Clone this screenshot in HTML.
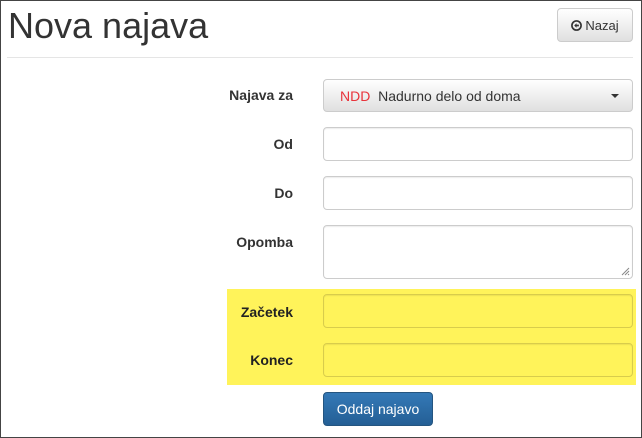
<!DOCTYPE html>
<html><head><style>
body{margin:0;width:642px;height:438px;overflow:hidden;font-family:"Liberation Sans",sans-serif;color:#333;font-size:14px}
.frame{position:absolute;left:0;top:0;width:640px;height:436px;border:1px solid #444;background:#fff}
.a{position:absolute}
h1{position:absolute;left:8px;top:4px;margin:0;font-weight:normal;font-size:36px;color:#333;line-height:44px}
.hr{left:7px;top:57px;width:626px;height:1px;background:#e5e5e5}
.btn{border:1px solid #ccc;border-radius:4px;background:linear-gradient(#fff,#e0e0e0);box-sizing:border-box;font-size:13px;display:flex;align-items:center;justify-content:center}
.inp{left:323px;width:310px;border:1px solid #ccc;border-radius:4px;box-sizing:border-box;background:#fff;box-shadow:inset 0 1px 1px rgba(0,0,0,.075)}
.lbl{width:120px;left:173px;text-align:right;font-weight:bold}
.y{background:#fff35a;border-color:#d8cc4c}
</style></head><body><div class="frame"></div>
<h1>Nova najava</h1>
<div class="a btn" style="left:557px;top:8px;width:76px;height:34px"><svg width="11" height="11" viewBox="0 0 12 12" style="margin-right:3px"><circle cx="6" cy="6" r="5" fill="none" stroke="#333" stroke-width="1.8"/><path d="M3.5 6L6 3.6V5h2.6v2H6v1.4z" fill="#333"/></svg>Nazaj</div>
<div class="a hr"></div>
<div class="a lbl" style="top:87px">Najava za</div>
<div class="a btn" style="left:323px;top:79px;width:310px;height:33px;justify-content:flex-start;padding-left:16px;font-size:14px"><span style="color:#e8333b">NDD</span>&nbsp; Nadurno delo od doma<span style="position:absolute;right:13px;top:14px;border:4px solid transparent;border-top:4px solid #333;border-bottom:0"></span></div>
<div class="a lbl" style="top:136px">Od</div>
<div class="a inp" style="top:127px;height:34px"></div>
<div class="a lbl" style="top:185px">Do</div>
<div class="a inp" style="top:176px;height:34px"></div>
<div class="a lbl" style="top:234px">Opomba</div>
<div class="a inp" style="top:225px;height:54px"><svg class="a" style="right:2px;bottom:2px" width="10" height="10"><path d="M9 2L2 9M9 5L5 9M9 8L8 9" stroke="#888"/></svg></div>
<div class="a" style="left:227px;top:289px;width:409px;height:96px;background:#fff35a"></div>
<div class="a lbl" style="top:304px;color:#222">Začetek</div>
<div class="a inp y" style="top:294px;height:34px"></div>
<div class="a lbl" style="top:352px;color:#222">Konec</div>
<div class="a inp y" style="top:343px;height:34px"></div>
<div class="a" style="left:323px;top:392px;width:110px;height:34px;border-radius:4px;background:linear-gradient(#3479b7,#245f95);border:1px solid #245580;box-sizing:border-box;color:#fff;display:flex;align-items:center;justify-content:center;font-size:14px">Oddaj najavo</div>
</body></html>
